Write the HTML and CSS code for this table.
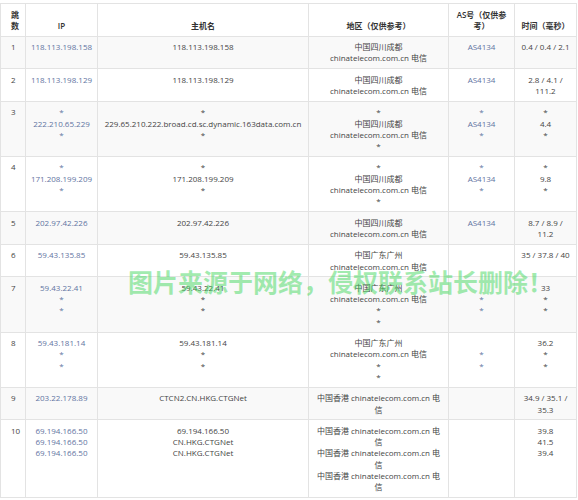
FILE: index.html
```html
<!DOCTYPE html>
<html lang="zh-CN">
<head>
<meta charset="utf-8">
<title>Traceroute</title>
<link rel="stylesheet" href="styles.css">
</head>
<body>
<div class="wrap">
<table class="trace">
  <colgroup>
    <col class="c-hop">
    <col class="c-ip">
    <col class="c-host">
    <col class="c-geo">
    <col class="c-as">
    <col class="c-time">
  </colgroup>
  <thead>
    <tr>
      <th class="hop">跳<br>数</th>
      <th>IP</th>
      <th>主机名</th>
      <th>地区（仅供参考）</th>
      <th>AS号（仅供参<br>考）</th>
      <th>时间（毫秒）</th>
    </tr>
  </thead>
  <tbody>
    <tr>
      <td class="hop">1</td>
      <td class="link">118.113.198.158</td>
      <td>118.113.198.158</td>
      <td>中国四川成都<br>chinatelecom.com.cn 电信</td>
      <td class="link">AS4134</td>
      <td>0.4 / 0.4 / 2.1</td>
    </tr>
    <tr>
      <td class="hop">2</td>
      <td class="link">118.113.198.129</td>
      <td>118.113.198.129</td>
      <td>中国四川成都<br>chinatelecom.com.cn 电信</td>
      <td class="link">AS4134</td>
      <td>2.8 / 4.1 /<br>111.2</td>
    </tr>
    <tr>
      <td class="hop">3</td>
      <td class="link">*<br>222.210.65.229<br>*</td>
      <td>*<br>229.65.210.222.broad.cd.sc.dynamic.163data.com.cn<br>*</td>
      <td>*<br>中国四川成都<br>chinatelecom.com.cn 电信<br>*</td>
      <td class="link">*<br>AS4134<br>*</td>
      <td>*<br>4.4<br>*</td>
    </tr>
    <tr>
      <td class="hop">4</td>
      <td class="link">*<br>171.208.199.209<br>*</td>
      <td>*<br>171.208.199.209<br>*</td>
      <td>*<br>中国四川成都<br>chinatelecom.com.cn 电信<br>*</td>
      <td class="link">*<br>AS4134<br>*</td>
      <td>*<br>9.8<br>*</td>
    </tr>
    <tr>
      <td class="hop">5</td>
      <td class="link">202.97.42.226</td>
      <td>202.97.42.226</td>
      <td>中国四川成都<br>chinatelecom.com.cn 电信</td>
      <td class="link">AS4134</td>
      <td>8.7 / 8.9 /<br>11.2</td>
    </tr>
    <tr>
      <td class="hop">6</td>
      <td class="link">59.43.135.85</td>
      <td>59.43.135.85</td>
      <td>中国广东广州<br>chinatelecom.com.cn 电信</td>
      <td class="link"></td>
      <td>35 / 37.8 / 40</td>
    </tr>
    <tr>
      <td class="hop">7</td>
      <td class="link">59.43.22.41<br>*<br>*</td>
      <td>59.43.22.41<br>*<br>*</td>
      <td>中国广东广州<br>chinatelecom.com.cn 电信<br>*<br>*</td>
      <td class="link">&nbsp;<br>*<br>*</td>
      <td>33<br>*<br>*</td>
    </tr>
    <tr>
      <td class="hop">8</td>
      <td class="link">59.43.181.14<br>*<br>*</td>
      <td>59.43.181.14<br>*<br>*</td>
      <td>中国广东广州<br>chinatelecom.com.cn 电信<br>*<br>*</td>
      <td class="link">&nbsp;<br>*<br>*</td>
      <td>36.2<br>*<br>*</td>
    </tr>
    <tr>
      <td class="hop">9</td>
      <td class="link">203.22.178.89</td>
      <td>CTCN2.CN.HKG.CTGNet</td>
      <td>中国香港 chinatelecom.com.cn 电<br>信</td>
      <td class="link"></td>
      <td>34.9 / 35.1 /<br>35.3</td>
    </tr>
    <tr>
      <td class="hop">10</td>
      <td class="link">69.194.166.50<br>69.194.166.50<br>69.194.166.50</td>
      <td>69.194.166.50<br>CN.HKG.CTGNet<br>CN.HKG.CTGNet</td>
      <td>中国香港 chinatelecom.com.cn 电<br>信<br>中国香港 chinatelecom.com.cn 电<br>信<br>中国香港 chinatelecom.com.cn 电<br>信</td>
      <td class="link"></td>
      <td>39.8<br>41.5<br>39.4</td>
    </tr>
  </tbody>
</table>
<div class="watermark">图片来源于网络，侵权联系站长删除！</div>
</div>
</body>
</html>
```

FILE: styles.css
```css
html, body {
  margin: 0;
  padding: 0;
  background: #ffffff;
}

.wrap {
  position: relative;
  padding-top: 3px;
}

.trace {
  width: 576px;
  table-layout: fixed;
  border-collapse: collapse;
  font-family: "Open Sans", "Noto Sans CJK SC", sans-serif;
  font-size: 8px;
  line-height: 11.3px;
  color: #444444;
}

.c-hop { width: 25px; }
.c-ip { width: 72px; }
.c-host { width: 211px; }
.c-geo { width: 140px; }
.c-as { width: 66px; }
.c-time { width: 62px; }

.trace th,
.trace td {
  border: 1px solid #e3e3e3;
  padding: 4.5px 3px;
  text-align: center;
  white-space: nowrap;
}

.trace th {
  vertical-align: bottom;
  font-weight: 600;
  color: #333333;
}

.trace td {
  vertical-align: top;
}

.trace .hop {
  text-align: left;
  padding-left: 10px;
  padding-right: 0;
}

.trace tbody tr:nth-child(odd) {
  background: #f9f9f9;
}

.trace .link {
  color: #5f74a2;
}

.watermark {
  position: absolute;
  left: 128px;
  top: 266px;
  font-family: "Noto Sans CJK SC", sans-serif;
  font-weight: 700;
  font-size: 25px;
  line-height: 30px;
  color: rgba(70, 215, 95, 0.5);
  white-space: nowrap;
  pointer-events: none;
}
```
